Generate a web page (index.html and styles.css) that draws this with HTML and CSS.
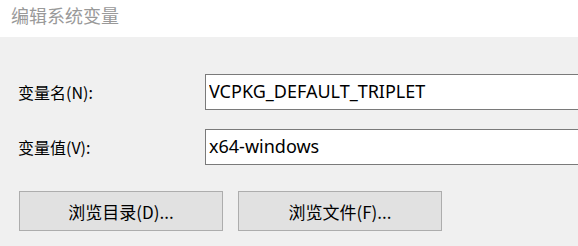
FILE: index.html
```html
<!DOCTYPE html>
<html lang="zh-CN">
<head>
    <meta charset="UTF-8">
    <title>编辑系统变量</title>
    <link rel="stylesheet" href="styles.css">
</head>
<body>
    <div class="titlebar">编辑系统变量</div>
    <div class="dialog">
        <div class="fields">
            <label class="label" for="var-name">变量名(N):</label>
            <input type="text" class="field" id="var-name" value="VCPKG_DEFAULT_TRIPLET">

            <label class="label" for="var-value">变量值(V):</label>
            <input type="text" class="field" id="var-value" value="x64-windows">
        </div>
        <div class="actions">
            <button class="btn">浏览目录(D)...</button>
            <button class="btn">浏览文件(F)...</button>
        </div>
    </div>
</body>
</html>
```

FILE: styles.css
```css
* {
    margin: 0;
    padding: 0;
    box-sizing: border-box;
}

body {
    font-family: "Noto Sans CJK SC", "Noto Sans", sans-serif;
    background: #f0f0f0;
    overflow: hidden;
    width: 578px;
    height: 246px;
}

.titlebar {
    height: 37px;
    background: #fff;
    color: #999;
    font-size: 18px;
    line-height: 30px;
    padding-left: 11px;
}

.dialog {
    padding: 37px 0 0 18px;
}

.fields {
    display: grid;
    grid-template-columns: 187px 400px;
    row-gap: 19px;
    align-items: center;
}

.label {
    font-size: 16px;
    color: #000;
}

.field {
    height: 36px;
    border: 1px solid #7a7a7a;
    background: #fff;
    font-family: "Noto Sans", sans-serif;
    font-size: 18px;
    color: #000;
    padding: 0 0 2px 3px;
    outline: none;
}

.actions {
    display: flex;
    gap: 15px;
    margin-top: 26px;
    padding-left: 1px;
}

.btn {
    width: 204px;
    height: 40px;
    background: #e1e1e1;
    border: 1px solid #adadad;
    font-family: "Noto Sans CJK SC", sans-serif;
    font-size: 17px;
    color: #000;
}
```
